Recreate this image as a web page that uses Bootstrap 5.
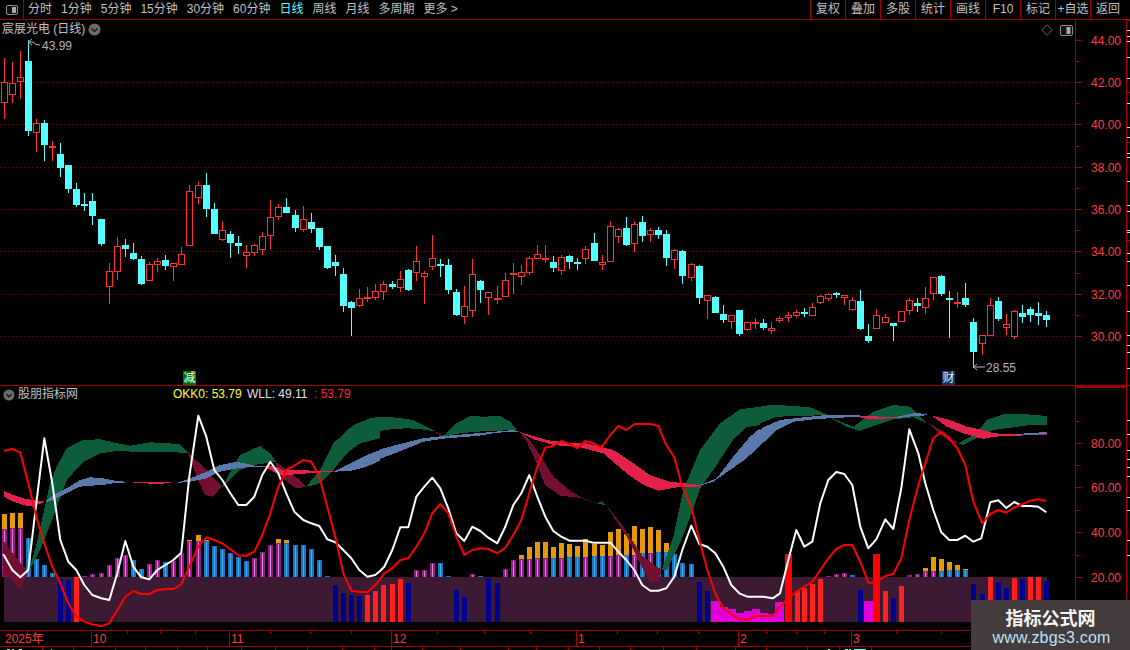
<!DOCTYPE html>
<html lang="zh">
<head>
<meta charset="utf-8">
<title>宸展光电 日线</title>
<link href="https://cdn.jsdelivr.net/npm/bootstrap@5.3.0/dist/css/bootstrap.min.css" rel="stylesheet">
<style>
html,body{height:100%;background:#000}
body{font:12px/1 "Liberation Sans","Noto Sans CJK SC",sans-serif;color:#c0c0c0;overflow:hidden}
.term{width:1130px;height:650px;background:#000;overflow:hidden}
.tbar{height:20px;border-bottom:1px solid #a00000;line-height:19px;flex:none}
.tbox{width:24px;height:19px;border-right:1px solid #a00000;flex:none}
.titems{gap:9px;margin-left:4px}
.tcur{color:#54ffff}
.tbtn{width:35px;height:19px;border-left:1px solid #a00000;text-align:center;white-space:nowrap}
.tbtn.lastb{width:40px;padding-right:5px}
.pprice{height:365px;flex:none}
.pind{height:245px;flex:none;border-top:1px solid #a00000}
.paxis{height:20px;flex:none}
.term svg{display:block}
.ctitle{left:2px;top:2px;height:15px;line-height:15px;gap:3px;white-space:nowrap}
.ctools{right:57px;top:4px;gap:7px}
.ihead{left:3px;top:1px;height:15px;line-height:15px;white-space:nowrap}
.iname{margin-left:3px;width:155px}
.iokk{color:#ffff3c;width:74px}
.iwll{color:#e0e0e0;width:67px}
.ired{color:#ff2828}
.wmark{right:0;bottom:0;width:159px;height:50px;background:#443c3c;text-align:center}
.wm1{font-weight:700;font-size:18px;line-height:20px;color:#f4f4f4;margin-top:7px;font-family:"Noto Sans CJK SC",sans-serif}
.wm2{font-size:16px;line-height:18px;margin-top:2px;padding-left:2px;color:#bfe0fa;letter-spacing:.2px}
.lbl{font:12px "Liberation Sans","Noto Sans CJK SC",sans-serif}
.axt{fill:#ff3c3c}
.gry{fill:#b4b4b4}
.grid{stroke:#7a0000;stroke-width:1;stroke-dasharray:1 3;shape-rendering:crispEdges}
.aline{stroke:#a80000;stroke-width:1}
.sq{shape-rendering:crispEdges}
</style>
</head>
<body>
<div class="term d-flex flex-column position-relative">
  <nav class="tbar d-flex align-items-start">
    <div class="tbox d-flex align-items-center justify-content-center">
      <svg width="14" height="12" viewBox="0 0 14 12"><rect x="1.5" y="1.5" width="11" height="9" rx="1.5" fill="#111" stroke="#8c8c8c"/><rect x="7" y="3" width="4" height="6" fill="#a8a8a8"/></svg>
    </div>
    <div class="titems d-flex">
      <span>分时</span><span>1分钟</span><span>5分钟</span><span>15分钟</span><span>30分钟</span><span>60分钟</span><span class="tcur">日线</span><span>周线</span><span>月线</span><span>多周期</span><span>更多 &gt;</span>
    </div>
    <div class="d-flex ms-auto">
      <span class="tbtn">复权</span><span class="tbtn">叠加</span><span class="tbtn">多股</span><span class="tbtn">统计</span><span class="tbtn">画线</span><span class="tbtn">F10</span><span class="tbtn">标记</span><span class="tbtn">+自选</span><span class="tbtn lastb">返回</span>
    </div>
  </nav>

  <section class="pprice position-relative">
    <svg id="sp" width="1130" height="365" viewBox="0 20 1130 365"></svg>
    <div class="ctitle position-absolute d-flex align-items-center">
      <span>宸展光电 (日线)</span>
      <svg width="13" height="13" viewBox="0 0 13 13"><circle cx="6.5" cy="6.5" r="6" fill="#6c6c6c"/><path d="M3.5 5.5 6.5 8.5 9.5 5.5" fill="none" stroke="#1c1c1c" stroke-width="1.5"/></svg>
    </div>
    <div class="ctools position-absolute d-flex align-items-center">
      <svg width="12" height="12" viewBox="0 0 12 12"><path d="M6 .8 11.2 6 6 11.2 .8 6Z" fill="none" stroke="#666"/></svg>
      <svg width="13" height="11" viewBox="0 0 13 11"><rect x=".5" y=".5" width="12" height="10" rx="1.5" fill="#111" stroke="#8c8c8c"/><rect x="6.5" y="2" width="4" height="7" fill="#a8a8a8"/></svg>
    </div>
  </section>

  <section class="pind position-relative">
    <svg id="si" width="1130" height="244" viewBox="0 386 1130 244"></svg>
    <div class="ihead position-absolute d-flex align-items-center">
      <svg width="12" height="12" viewBox="0 0 13 13"><circle cx="6.5" cy="6.5" r="6" fill="#6c6c6c"/><path d="M3.5 5.5 6.5 8.5 9.5 5.5" fill="none" stroke="#1c1c1c" stroke-width="1.5"/></svg>
      <span class="iname">股朋指标网</span>
      <span class="iokk">OKK0: 53.79</span>
      <span class="iwll">WLL: 49.11</span>
      <span class="ired">: 53.79</span>
    </div>
  </section>

  <footer class="paxis">
    <svg id="sa" width="1130" height="20" viewBox="0 630 1130 20"></svg>
  </footer>

  <aside class="wmark position-absolute">
    <div class="wm1">指标公式网</div>
    <div class="wm2">www.zbgs3.com</div>
  </aside>
</div>

<script>
const NS='http://www.w3.org/2000/svg';
function el(svg,tag,a,txt){const e=document.createElementNS(NS,tag);for(const k in a)e.setAttribute(k,a[k]);if(txt!=null)e.textContent=txt;svg.appendChild(e);return e;}
const sp=document.getElementById('sp'),si=document.getElementById('si'),sa=document.getElementById('sa');
const RED='#ff3232',CY='#54ffff';

/* ---------- price panel ---------- */
[82.5,124.5,167.5,209.5,251.5,294.5,336.5].forEach(y=>el(sp,'line',{x1:0,x2:1075,y1:y,y2:y,class:'grid'}));
/* [zoomX, high, top, bottom, low, colour] */
const c6=[[13,23,97,158,207,'r'],[37,37,100,134,158,'r'],[61,3,82,95,147,'r'],[85,-30,33,243,258,'c'],[109,207,220,250,305,'r'],[133,210,220,285,333,'c'],[157,273,289,293,333,'r'],[181,279,312,354,381,'c'],[205,345,345,417,429,'c'],[229,400,417,465,471,'c'],[253,429,462,468,483,'c'],[277,429,453,498,525,'c'],[304,507,507,582,588,'c'],[328,639,664,710,762,'r'],[352,561,589,665,690,'r'],[376,567,585,597,621,'c'],[400,579,609,627,630,'c'],[424,618,627,702,705,'c'],[448,636,643,692,692,'r'],[472,624,634,644,666,'r'],[496,615,630,648,660,'c'],[520,640,640,650,693,'r'],[544,591,613,644,644,'r'],[568,405,424,587,587,'r'],[595,396,406,443,462,'r'],[619,369,405,477,501,'c'],[643,459,477,552,552,'c'],[667,513,541,569,573,'r'],[691,543,552,579,624,'c'],[715,558,579,588,612,'c'],[739,585,607,617,654,'r'],[763,582,586,608,618,'r'],[787,546,559,599,615,'r'],[811,450,502,557,597,'r'],[835,462,472,500,510,'r'],[859,444,471,489,489,'c'],[886,480,495,534,546,'c'],[910,468,508,539,546,'r'],[934,489,516,537,549,'c'],[958,534,534,591,600,'c'],[982,588,588,654,657,'c'],[1006,615,636,648,678,'c'],[1030,654,672,768,786,'c'],[1054,753,756,774,858,'c'],[1078,717,745,767,771,'r'],[1102,711,741,747,756,'r'],[1126,702,724,743,750,'r']];
const c7=[[10,243,253,275,300,'r'],[37,243,252,261,267,'c'],[61,213,238,263,276,'r'],[85,207,210,270,273,'c'],[109,138,184,218,243,'r'],[133,213,220,230,312,'r'],[157,105,175,200,210,'r'],[181,177,191,195,231,'c'],[205,177,195,270,282,'c'],[229,267,276,345,348,'c'],[253,258,319,350,372,'r'],[277,177,223,332,351,'r'],[301,240,243,270,309,'c'],[325,276,277,293,345,'r'],[352,258,294,297,312,'r'],[376,219,241,290,291,'r'],[400,189,220,224,282,'r'],[424,195,217,230,255,'r'],[448,168,175,218,225,'r'],[472,135,163,176,176,'r'],[496,135,174,177,189,'r'],[520,168,186,204,216,'c'],[544,165,172,212,225,'r'],[568,165,168,186,207,'c'],[592,174,186,192,210,'c'],[616,138,148,176,192,'r'],[643,99,129,183,183,'c'],[667,165,187,194,210,'r'],[691,63,79,185,185,'r'],[715,84,88,110,129,'r'],[739,51,84,135,138,'c'],[763,63,73,131,156,'r'],[787,48,66,108,126,'c'],[811,84,91,104,126,'r'],[835,81,90,105,117,'c'],[859,90,102,174,198,'c'],[883,147,151,179,207,'r'],[907,150,153,228,252,'c'],[934,189,193,233,243,'r'],[958,195,198,294,312,'c'],[982,286,286,302,357,'r'],[1006,288,291,339,339,'c'],[1030,315,342,360,369,'c'],[1054,345,346,365,387,'r'],[1078,330,330,402,408,'c'],[1102,367,367,389,393,'r'],[1126,354,367,371,387,'r']];
const c8=[[70,208,219,234,240,'c'],[94,216,235,242,252,'r'],[118,198,203,213,219,'r'],[145,186,196,203,216,'r'],[169,180,187,198,204,'r'],[193,174,186,189,201,'c'],[217,159,172,197,198,'r'],[241,135,139,158,162,'r'],[265,129,133,147,153,'r'],[289,126,129,132,144,'c'],[313,135,136,144,165,'r'],[337,141,151,180,183,'r'],[361,120,153,237,240,'c'],[385,222,258,273,279,'c'],[409,177,196,236,237,'r'],[436,192,202,218,219,'r'],[460,219,219,228,273,'c'],[484,183,184,215,215,'r'],[508,144,151,182,195,'r'],[532,144,159,168,186,'c'],[556,111,145,173,192,'r'],[580,81,82,133,150,'r'],[604,75,78,132,138,'c'],[628,123,144,147,264,'c'],[652,126,156,160,174,'r'],[676,99,144,165,171,'c'],[700,204,216,306,354,'c'],[727,255,256,282,315,'r'],[751,144,165,257,258,'r'],[775,141,153,207,213,'c'],[799,192,223,233,255,'r'],[823,180,184,260,267,'r'],[847,165,189,201,219,'c'],[871,171,177,195,216,'c'],[895,156,189,198,225,'c'],[919,183,195,210,231,'c']];
function candles(list,ox,oy){
  list.forEach(([z,h,t,b,l,k])=>{
    const cx=Math.floor(ox+z/3)+.5,Y=v=>Math.round(oy+v/3),col=k==='r'?RED:CY;
    el(sp,'line',{x1:cx,x2:cx,y1:Y(h),y2:Y(l),stroke:col,class:'sq'});
    const T=Y(t),B=Y(b);
    if(B-T<=2){el(sp,'rect',{x:cx-3.5,y:T,width:7,height:2,fill:col,class:'sq'});}
    else if(k==='c'){el(sp,'rect',{x:cx-3.5,y:T,width:7,height:B-T,fill:col,class:'sq'});}
    else{el(sp,'rect',{x:cx-3,y:T+.5,width:6,height:B-T-1,fill:'#000',stroke:col,class:'sq'});}
  });
}
candles(c6,0,50);candles(c7,380,200);candles(c8,740,250);

/* high and low notes */
el(sp,'path',{d:'M32 39 28.5 42 32 45M28.5 42H33L36 44.5 40 45',fill:'none',stroke:'#b4b4b4'});
el(sp,'text',{x:42,y:50,class:'lbl gry'},'43.99');
el(sp,'path',{d:'M977 364 973.5 367 977 370M973.5 367H985',fill:'none',stroke:'#b4b4b4'});
el(sp,'text',{x:986,y:372,class:'lbl gry'},'28.55');

/* signal chips */
el(sp,'rect',{x:183,y:371,width:13,height:14,fill:'#007000',class:'sq'});
el(sp,'text',{x:183.5,y:382,fill:'#eaffea',class:'lbl'},'减');
el(sp,'rect',{x:942,y:371,width:13,height:14,fill:'#0c3a68',class:'sq'});
el(sp,'text',{x:942.5,y:382,fill:'#dff0ff',class:'lbl'},'财');

/* right scale of price panel */
el(sp,'line',{x1:1075.5,x2:1075.5,y1:20,y2:386,class:'aline sq'});
el(sp,'line',{x1:1126.5,x2:1126.5,y1:20,y2:386,class:'aline sq'});
[[40,'44.00'],[82,'42.00'],[124,'40.00'],[167,'38.00'],[209,'36.00'],[251,'34.00'],[294,'32.00'],[336,'30.00']].forEach(([y,t])=>{
  el(sp,'line',{x1:1076,x2:1081,y1:y+.5,y2:y+.5,class:'aline sq'});
  el(sp,'text',{x:1091,y:y+5,class:'lbl axt'},t);
});
[61,103,146,188,230,273,315].forEach(y=>el(sp,'line',{x1:1076,x2:1079,y1:y+.5,y2:y+.5,class:'aline sq'}));
[30,36,41,57,78,103,127,137,153,157,181,205,211,230,232,253,261,285,311,335,345,352,368].forEach(y=>el(sp,'line',{x1:1127,x2:1130,y1:y+.5,y2:y+.5,stroke:'#d8d8d8',class:'sq'}));
[20,92,142,240].forEach(y=>el(sp,'line',{x1:1127,x2:1130,y1:y+.5,y2:y+.5,class:'aline sq'}));

/* ---------- indicator panel ---------- */
const IX=(o,z)=>o+z/3, IY=v=>370+v/3;
/* band under the histogram */
el(si,'rect',{x:4,y:577,width:1043,height:45,fill:'#3c1a33',class:'sq'});

/* histogram above the band: [zoomX, top of lower colour, top of orange or 0, kind] */
function upbars(o,list){
  list.forEach(([z,t,ot,k])=>{
    const x=Math.round(IX(o,z))-2,top=Math.round(IY(t)),bot=577;
    const base=k==='p'?'#98188c':'#1478c8',mid=k==='p'?'#d48ad0':'#4aa8e8';
    el(si,'rect',{x:x,y:top,width:5,height:bot-top,fill:base,class:'sq'});
    if(bot-top>2)el(si,'rect',{x:x+2,y:top+1,width:1,height:bot-top-1,fill:mid,class:'sq'});
    if(ot){const ty=Math.round(IY(ot));el(si,'rect',{x:x,y:ty,width:5,height:top-ty,fill:'#e69a0a',class:'sq'});}
  });
}
upbars(0,[[13,477,432,'p'],[37,475,429,'p'],[61,473,429,'p'],[85,504,0,'b'],[109,567,0,'b'],[133,585,0,'b'],[157,609,0,'b'],[253,618,0,'p'],[277,612,0,'p'],[304,609,0,'p'],[328,585,0,'p'],[352,564,0,'p'],[376,555,0,'p'],[400,570,0,'b'],[424,597,0,'b'],[448,582,0,'p'],[472,570,0,'p'],[496,576,0,'b'],[520,573,0,'p'],[544,549,0,'p'],[568,513,510,'p'],[595,513,495,'p'],[619,513,510,'b'],[643,528,0,'b'],[667,537,0,'b'],[691,549,0,'b'],[715,561,0,'b'],[739,573,0,'b'],[763,564,0,'p'],[787,546,0,'p'],[811,525,0,'p'],[835,519,507,'p'],[859,519,510,'b'],[886,525,0,'b'],[910,525,0,'b'],[934,537,0,'b'],[958,570,0,'b'],[982,618,0,'b']]);
upbars(380,[[109,600,0,'p'],[133,600,0,'p'],[157,579,0,'p'],[181,579,0,'b'],[205,618,0,'b'],[277,612,0,'p'],[301,618,0,'b'],[376,597,0,'p'],[400,570,0,'p'],[424,567,555,'p'],[448,567,531,'p'],[472,564,516,'p'],[496,564,516,'p'],[520,564,531,'b'],[544,564,519,'p'],[568,561,522,'b'],[592,561,528,'b'],[616,561,507,'p'],[643,558,522,'b'],[667,558,525,'b'],[691,558,486,'p'],[715,555,477,'p'],[739,555,492,'b'],[763,555,468,'p'],[787,549,477,'b'],[811,549,471,'p'],[835,546,480,'b'],[859,546,519,'b'],[883,552,0,'b'],[907,579,0,'b'],[934,582,0,'b']]);
upbars(750,[[235,618,0,'p'],[259,612,0,'p'],[283,609,0,'p'],[307,615,0,'b'],[478,615,0,'p'],[502,612,0,'p'],[526,603,594,'p'],[550,603,561,'p'],[574,603,567,'b'],[598,600,576,'b'],[622,600,585,'b'],[646,600,597,'b']]);

/* bars standing in the band */
const DB='#000090',RB='#ff2020',MG='#e000d8';
function dnbars(o,list){list.forEach(([z,t,c,w])=>{const W=w||5,x=Math.round(IX(o,z)-W/2),top=Math.round(IY(t));el(si,'rect',{x:x,y:top,width:W,height:622-top,fill:c,class:'sq'});});}
dnbars(0,[[181,627,DB],[205,630,DB],[229,621,RB],[1006,645,DB],[1030,669,DB],[1054,675,DB],[1078,678,DB],[1102,675,RB],[1126,663,RB]]);
dnbars(380,[[10,645,RB],[37,642,RB],[61,627,RB],[85,639,DB],[229,660,DB],[253,681,DB],[325,624,DB],[352,639,DB],[958,636,DB],[982,663,DB]]);
/* magenta steps */
[[380,993,1020,693],[380,1020,1044,711],[380,1044,1068,716],[380,1068,1092,729],[380,1092,1116,723],[380,1116,1140,717],[750,30,54,729],[750,54,75,732],[750,75,102,696],[750,343,369,693]].forEach(([o,a,b,t])=>{
  const x=Math.round(IX(o,a)),x2=Math.round(IX(o,b)),y=Math.round(IY(t));el(si,'rect',{x:x,y:y,width:x2-x,height:622-y,fill:MG,class:'sq'});
});
dnbars(750,[[115,552,'#ff0000',7],[142,663,RB],[163,654,RB],[187,642,RB],[211,627,RB],[331,660,DB],[379,552,'#ff0000',7],[406,663,RB],[430,684,DB],[454,648,RB],[670,642,DB],[697,672,DB],[721,621,RB],[745,636,DB],[769,654,DB],[793,624,RB],[817,627,DB],[841,621,RB],[865,621,RB],[889,633,DB]]);

/* ribbons */
const GR='#0d5d3a',WN='#73102f',PK='#e3224c',BL='#5b7aab';
function poly(o,c,f){const p=[];for(let i=0;i<f.length;i+=2)p.push((IX(o,f[i])).toFixed(1)+','+(IY(f[i+1])).toFixed(1));el(si,'polygon',{points:p.join(' '),fill:c,class:'sq'});}
poly(0,WN,[8,510,50,565,85,605,60,660,30,620,8,620]);
poly(0,GR,[85,610,110,520,150,340,170,290,200,235,250,210,300,208,340,217,390,227,450,217,540,222,565,250,500,245,400,245,350,243,300,250,250,275,200,330,160,440,120,540]);
poly(0,WN,[565,250,610,290,665,350,640,380,615,375,590,320]);
poly(0,GR,[665,352,720,255,780,228,810,250,828,275,760,285,720,300,700,320]);
poly(0,WN,[825,275,870,305,920,350,890,355,860,335,840,315]);
poly(0,GR,[920,348,960,300,1000,220,1060,165,1110,145,1140,140,1140,205,1080,220,1040,250,1000,300,960,340,930,348]);
poly(380,GR,[0,140,50,143,100,150,130,165,170,185,120,177,80,175,40,177,0,183]);
poly(380,WN,[170,185,190,197,185,198,165,186]);
poly(380,GR,[190,197,230,160,270,138,310,140,360,138,390,155,412,180,350,182,290,185,240,190,200,197]);
poly(380,WN,[415,180,445,205,480,255,520,320,570,362,610,385,650,400,600,383,540,377,495,345,470,280,440,215]);
poly(380,GR,[650,400,665,394,678,405,660,403]);
poly(380,WN,[678,405,730,470,790,560,845,600,835,635,810,640,780,580,740,500,700,440]);
poly(380,GR,[845,600,880,500,910,360,960,240,1020,160,1080,118,1140,110,1140,165,1100,172,1060,208,1000,300,960,355,935,430,900,520,860,600]);
poly(750,GR,[30,110,60,105,120,107,180,112,235,135,150,138,80,140,30,160]);
poly(750,GR,[235,140,310,170,330,183,290,170]);
poly(750,GR,[310,170,370,125,430,105,480,110,530,160,490,142,430,148,380,165,330,182]);
poly(750,WN,[530,155,580,185,625,220,600,215,560,185]);
poly(750,GR,[625,220,680,190,710,150,760,133,830,133,890,138,890,165,840,165,790,172,730,180,680,205,640,225]);
poly(0,PK,[12,363,40,375,70,385,100,390,135,395,100,410,70,405,40,395,12,380]);
poly(0,BL,[135,397,160,375,200,355,240,330,270,322,310,325,350,333,400,337,350,338,310,345,270,347,240,350,200,370,160,390]);
poly(0,PK,[400,336,470,336,530,338,470,342,400,338]);
poly(0,BL,[530,339,570,325,620,305,660,285,710,275,770,288,800,290,760,290,710,295,660,305,620,325,570,335]);
poly(0,PK,[790,288,830,290,850,300,870,300,950,302,1000,302,1000,306,950,308,870,314,850,318,830,310]);
poly(0,BL,[1000,305,1050,280,1100,255,1140,240,1140,272,1100,290,1050,303]);
poly(380,BL,[0,238,60,222,130,205,200,197,290,190,400,180,415,185,350,188,290,198,200,205,130,215,70,240,0,267]);
poly(380,PK,[415,185,500,210,560,218,620,220,700,240,760,280,810,315,870,335,960,345,960,352,890,352,835,362,790,345,740,310,670,250,600,232,520,225,460,208]);
poly(380,BL,[960,345,1010,325,1060,260,1110,200,1140,175,1140,222,1100,265,1050,300,1000,335,960,347]);
poly(750,BL,[0,205,40,172,90,150,150,143,220,136,330,136,330,140,270,143,200,147,130,155,80,180,40,218,0,255]);
poly(750,PK,[330,138,360,138,420,142,470,137,470,142,360,148,330,142]);
poly(750,BL,[440,140,500,128,545,136,500,137,440,145]);
poly(750,PK,[545,137,600,150,650,170,700,180,730,190,780,192,890,193,890,194,800,197,730,200,700,207,640,190,590,170]);
poly(750,BL,[800,192,890,186,890,192,800,197]);

/* lines */
function line(col,sets){let last=-1,p=[];sets.forEach(([o,f])=>{for(let i=0;i<f.length;i+=2){const x=IX(o,f[i]);if(x>last){p.push(x.toFixed(1)+','+IY(f[i+1]).toFixed(1));last=x;}}});el(si,'polyline',{points:p.join(' '),fill:'none',stroke:col,'stroke-width':2,'stroke-linejoin':'round'});}
line('#ffffff',[[0,[10,553,37,600,61,622,85,600,109,400,133,205,157,340,181,510,205,575,229,600,253,645,277,675,304,685,328,690,352,610,376,513,400,590,424,622,448,628,472,600,496,585,520,570,544,548,568,320,595,137,619,200,643,300,667,330,691,370,715,405,739,405,763,380,787,315,811,275,835,310,859,370,883,425,910,450,934,460,958,468,982,508,1006,517,1030,540,1054,565,1078,600,1102,620,1126,615,1140,603]],[380,[13,590,37,540,61,472,85,472,109,380,133,350,157,323,181,355,205,415,229,490,253,513,277,470,301,483,325,503,352,520,376,470,400,405,424,370,448,315,472,380,496,440,520,483,544,500,568,512,592,512,616,512,640,518,664,518,691,518,715,545,739,570,763,600,787,645,811,662,835,662,859,655,883,620,907,540,934,467,958,522,982,530,1006,550,1030,590,1054,645,1078,670,1102,680,1126,680]],[750,[40,680,68,685,90,670,115,570,139,480,163,530,187,515,211,400,235,330,259,306,283,312,307,345,331,470,355,535,379,508,406,448,430,477,454,355,478,178,505,250,526,340,550,420,574,487,598,510,622,510,646,497,670,515,694,505,721,397,745,391,769,414,793,396,817,408,841,408,865,410,889,427]]]);
line('#ff0000',[[0,[12,243,37,237,61,248,85,340,109,440,133,520,157,590,181,640,205,700,229,740,253,755,277,763,304,769,328,760,352,720,376,680,400,663,424,672,448,672,472,660,496,657,520,657,544,643,568,590,595,530,619,502,643,510,667,520,691,538,715,556,739,558,763,545,787,495,811,430,835,350,859,300,883,287,910,270,934,275,958,320,982,410,1006,500,1030,610,1054,662,1078,666,1102,666,1126,645,1140,628]],[380,[13,610,37,595,61,570,85,565,109,530,133,490,157,430,181,402,205,430,229,500,253,555,277,540,301,535,325,537,352,550,376,533,400,495,424,450,448,370,472,290,496,233,520,228,544,213,568,222,592,235,616,213,640,220,664,232,691,195,715,168,739,180,763,162,787,162,811,162,835,168,859,225,883,262,907,350,934,410,958,510,982,600,1006,670,1030,715,1054,732,1078,748,1102,750,1126,738]],[750,[40,738,68,738,90,710,115,685,139,665,163,650,187,635,211,600,235,565,259,537,283,525,307,525,331,575,355,638,379,638,406,618,430,612,454,565,478,450,505,345,526,280,550,205,574,185,598,205,622,235,646,285,670,395,697,460,721,432,745,420,769,428,793,412,817,403,841,392,865,388,889,393]]]);

/* right scale of indicator panel */
el(si,'line',{x1:1075.5,x2:1075.5,y1:386,y2:630,class:'aline sq'});
el(si,'rect',{x:1076,y:386,width:49,height:2,fill:'#a80000',class:'sq'});
el(si,'line',{x1:1126.5,x2:1126.5,y1:386,y2:630,class:'aline sq'});
[[443,'80.00'],[487,'60.00'],[532,'40.00'],[577,'20.00']].forEach(([y,t])=>{
  el(si,'line',{x1:1076,x2:1081,y1:y+.5,y2:y+.5,class:'aline sq'});
  el(si,'text',{x:1091,y:y+5,class:'lbl axt'},t);
});
[421,465,510,555].forEach(y=>el(si,'line',{x1:1076,x2:1079,y1:y+.5,y2:y+.5,class:'aline sq'}));
[420,434,450,459,467,476,497,510,540,555].forEach(y=>el(si,'line',{x1:1127,x2:1130,y1:y+.5,y2:y+.5,stroke:'#d8d8d8',class:'sq'}));

/* ---------- time axis ---------- */
el(sa,'rect',{x:0,y:630,width:1130,height:1,fill:'#a80000',class:'sq'});
el(sa,'rect',{x:0,y:646,width:1130,height:1,fill:'#a80000',class:'sq'});
[[4,'2025年',-1],[92,'10',91],[230,'11',229],[392,'12',391],[577,'1',576],[739,'2',738],[852,'3',851]].forEach(([x,t,s])=>{
  if(s>=0)el(sa,'rect',{x:s,y:631,width:1,height:15,fill:'#a80000',class:'sq'});
  el(sa,'text',{x:x+1,y:643,class:'lbl axt'},t);
});
[27,127,160,195,270,310,351,437,484,530,617,657,698,766,796,824,896,941].forEach(x=>el(sa,'rect',{x:x,y:631,width:1,height:3,fill:'#a80000',class:'sq'}));
[42,73,115,145,177,207,241,275,307,342,374,391,422,460,508,536,568,599,630,663,696,735,766,807,839,871].forEach(x=>el(sa,'rect',{x:x,y:647,width:1,height:3,fill:'#a80000',class:'sq'}));
/* tops of the tab labels that the window edge cuts away */
[[7,3],[12,2],[19,3],[51,1],[828,2]].forEach(([x,w])=>el(sa,'rect',{x:x,y:649,width:w,height:1,fill:'#d0d0d0',class:'sq'}));
[[845,3],[849,2],[854,12]].forEach(([x,w])=>el(sa,'rect',{x:x,y:649,width:w,height:1,fill:'#54ffff',class:'sq'}));
</script>
<script src="https://cdn.jsdelivr.net/npm/bootstrap@5.3.0/dist/js/bootstrap.bundle.min.js"></script>
</body>
</html>
